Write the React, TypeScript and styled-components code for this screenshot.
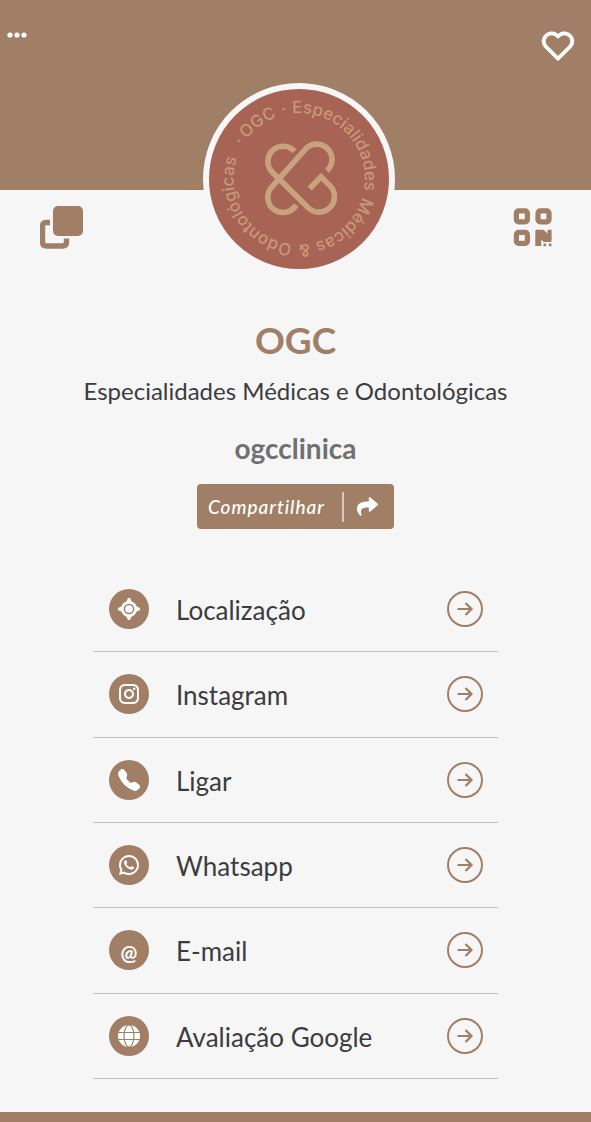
import React from "react";
import styled, { createGlobalStyle } from "styled-components";
import { FaShare } from "react-icons/fa";
import { BiHeart } from "react-icons/bi";
import { BsTelephoneFill } from "react-icons/bs";
import { RiInstagramLine, RiWhatsappLine } from "react-icons/ri";

const brown = "#a17f66";
const paper = "#f6f6f6";
const ink = "#3c3c3e";

const GlobalStyle = createGlobalStyle`
  *, *::before, *::after { box-sizing: border-box; }
  body {
    margin: 0;
    background: ${paper};
    color: ${ink};
    font-family: Lato, "Liberation Sans", sans-serif;
  }
`;

const Page = styled.div`
  display: flex;
  flex-direction: column;
  min-height: 100vh;
`;

const Cover = styled.header`
  display: flex;
  justify-content: space-between;
  align-items: flex-start;
  height: 190px;
  padding: 27px 14px 0 7px;
  background: ${brown};
`;

const IconButton = styled.button`
  display: flex;
  padding: 0;
  border: 0;
  background: none;
  color: ${(p) => p.color || brown};
  cursor: pointer;
`;

const ProfileBar = styled.div`
  display: flex;
  justify-content: space-between;
  align-items: flex-end;
  margin-top: -107px;
  padding: 0 39px 0 40px;
`;

const SideAction = styled(IconButton)`
  padding-bottom: 26px;
`;

const Avatar = styled.div`
  width: 192px;
  height: 192px;
  border: 6px solid ${paper};
  border-radius: 50%;
  overflow: hidden;
  background: #a76354;

  svg { display: block; width: 100%; height: 100%; }
`;

const Main = styled.main`
  display: flex;
  flex-direction: column;
  align-items: center;
  flex: 1;
  padding: 39px 80px 32px;
`;

const Name = styled.h1`
  margin: 0;
  font-size: 37px;
  line-height: 52px;
  font-weight: 700;
  color: ${brown};
`;

const Tagline = styled.p`
  margin: 8px 0 0;
  font-size: 24px;
  line-height: 34px;
  text-align: center;
`;

const Handle = styled.h2`
  margin: 20px 0 0;
  font-size: 28px;
  line-height: 40px;
  font-weight: 700;
  color: #707072;
`;

const ShareButton = styled.button`
  display: flex;
  align-items: center;
  height: 45px;
  margin: 16px 0 38px;
  padding: 0 16px 0 11px;
  border: 0;
  border-radius: 4px;
  background: ${brown};
  color: #fff;
  font: italic 500 19px Lato, sans-serif;
  letter-spacing: 1px;
  cursor: pointer;
`;

const Divider = styled.span`
  width: 2px;
  height: 30px;
  margin: 0 13px 0 17px;
  background: #d5c8be;
`;

const LinkList = styled.ul`
  display: grid;
  grid-auto-rows: 1fr;
  width: 100%;
  max-width: 405px;
  min-height: 512px;
  margin: 0;
  padding: 0;
  list-style: none;
`;

const LinkItem = styled.li`
  display: flex;
  border-bottom: 1px solid #c2c2c2;
`;

const LinkRow = styled.a`
  display: flex;
  flex: 1;
  align-items: center;
  padding: 0 15px 0 16px;
  color: inherit;
  text-decoration: none;
`;

const Badge = styled.span`
  display: flex;
  align-items: center;
  justify-content: center;
  width: 40px;
  height: 40px;
  border-radius: 50%;
  background: ${brown};
  color: #fff;
`;

const AtSign = styled.span`
  padding-top: 4px;
  font-size: 20px;
  line-height: 24px;
  font-weight: 700;
`;

const Label = styled.span`
  flex: 1;
  padding: 2px 0 0 27px;
  font-size: 26px;
  line-height: 32px;
`;

const Footer = styled.footer`
  height: 10px;
  background: ${brown};
`;

const DotsIcon = () => (
  <svg width="20" height="16" viewBox="0 0 20 16" fill="currentColor">
    <circle cx="3" cy="8" r="2.6" />
    <circle cx="10" cy="8" r="2.6" />
    <circle cx="17" cy="8" r="2.6" />
  </svg>
);

const CopyIcon = () => (
  <svg width="44" height="43" viewBox="0 0 44 43">
    <rect x="13" y="0" width="30" height="30" rx="5" fill={brown} />
    <path d="M10 16.500H6.500q-4 0-4 4V36q0 4 4 4H22.500q4 0 4-4V32.500" fill="none" stroke={brown} strokeWidth="5.400" />
  </svg>
);

const QrIcon = () => (
  <svg width="39" height="41" viewBox="0 0 39 41">
    <g fill="none" stroke={brown} strokeWidth="5.2">
      <rect x="3.400" y="2.900" width="11" height="11" rx="2.200" />
      <rect x="25" y="2.900" width="11" height="11" rx="2.200" />
      <rect x="3.400" y="24.400" width="11" height="11" rx="2.200" />
    </g>
    <path
      d="M23.500 21.700H30.500L34.500 25.500V21.700H38.600V32.600Q38.600 34 37.200 34H31.500Q30 34 28.200 31.500V38H22.300V23Q22.300 21.700 23.500 21.700zM30.500 35.600h2.600v2.600h-2.600zM35.800 35.600h2.600v2.600h-2.600z"
      fill={brown}
    />
  </svg>
);

const TargetIcon = () => (
  <svg width="22" height="22" viewBox="0 0 22 22">
    <path d="M10 0h2L14 4.500H8zM10 22h2L14 17.500H8zM0 10v2L4.500 14V8zM22 10v2L17.500 14V8z" fill="currentColor" />
    <circle cx="11" cy="11" r="8" fill="currentColor" />
    <circle cx="11" cy="11" r="4.600" fill="none" stroke={brown} strokeWidth="1.500" />
  </svg>
);

const GlobeIcon = () => (
  <svg width="22" height="22" viewBox="0 0 23 23">
    <circle cx="11.500" cy="11.500" r="11.500" fill="currentColor" />
    <g fill="none" stroke={brown} strokeWidth="1.200">
      <ellipse cx="11.500" cy="11.500" rx="5.200" ry="11.500" />
      <path d="M0 7.800h23M0 15.200h23" />
    </g>
  </svg>
);

const ArrowIcon = () => (
  <svg width="36" height="36" viewBox="0 0 36 36" fill="none" stroke={brown} strokeWidth="2">
    <circle cx="18" cy="18" r="17" />
    <path d="M10.500 18h14M18.500 12l6 6-6 6" strokeWidth="2.200" />
  </svg>
);

/* Words round the ring, each placed by its clockwise angle from the ring's start. */
const ringWords: [string, number][] = [
  ["Especialidades", 4],
  ["Médicas", 116],
  ["&", 181],
  ["Odontológicas", 196],
  ["·", 310],
  ["OGC", 317],
  ["·", 355],
];

const Logo = () => (
  <svg viewBox="40 41 543 543" role="img" aria-label="OGC">
    <defs>
      <path id="ring" d="M312 114A198 198 0 0 1 312 510A198 198 0 0 1 312 114" />
    </defs>
    <g fill="none" stroke="#c8a27e" strokeWidth="17">
      <path d="M298 229A46 46 0 1 0 229.500 290.500L340 400A46.700 46.700 0 0 0 406 334L378 306L344 341" />
      <path d="M303 391A46 46 0 1 1 229.500 336.500L333.500 219.500A46 46 0 1 1 396 288" />
    </g>
    <g transform="rotate(-10 312 312)" fill="#c89878" fontFamily="Inter, sans-serif" fontSize="51" fontWeight="500">
      {ringWords.map(([word, angle]) => (
        <text key={angle}>
          <textPath href="#ring" startOffset={`${(angle / 360) * 100}%`}>{word}</textPath>
        </text>
      ))}
    </g>
  </svg>
);

const links = [
  { label: "Localização", icon: <TargetIcon /> },
  { label: "Instagram", icon: <RiInstagramLine size={24} /> },
  { label: "Ligar", icon: <BsTelephoneFill size={22} /> },
  { label: "Whatsapp", icon: <RiWhatsappLine size={24} /> },
  { label: "E-mail", icon: <AtSign>@</AtSign> },
  { label: "Avaliação Google", icon: <GlobeIcon /> },
];

export default function App() {
  return (
    <Page>
      <GlobalStyle />
      <Cover>
        <IconButton color="#fff" aria-label="Mais opções"><DotsIcon /></IconButton>
        <IconButton color="#fff" aria-label="Favoritar">
          <BiHeart size={38} stroke="currentColor" strokeWidth={0.5} />
        </IconButton>
      </Cover>
      <ProfileBar>
        <SideAction aria-label="Copiar"><CopyIcon /></SideAction>
        <Avatar><Logo /></Avatar>
        <SideAction aria-label="Código QR"><QrIcon /></SideAction>
      </ProfileBar>
      <Main>
        <Name>OGC</Name>
        <Tagline>Especialidades Médicas e Odontológicas</Tagline>
        <Handle>ogcclinica</Handle>
        <ShareButton>
          Compartilhar
          <Divider />
          <FaShare size={21} />
        </ShareButton>
        <LinkList>
          {links.map(({ label, icon }) => (
            <LinkItem key={label}>
              <LinkRow href="#">
                <Badge>{icon}</Badge>
                <Label>{label}</Label>
                <ArrowIcon />
              </LinkRow>
            </LinkItem>
          ))}
        </LinkList>
      </Main>
      <Footer />
    </Page>
  );
}
